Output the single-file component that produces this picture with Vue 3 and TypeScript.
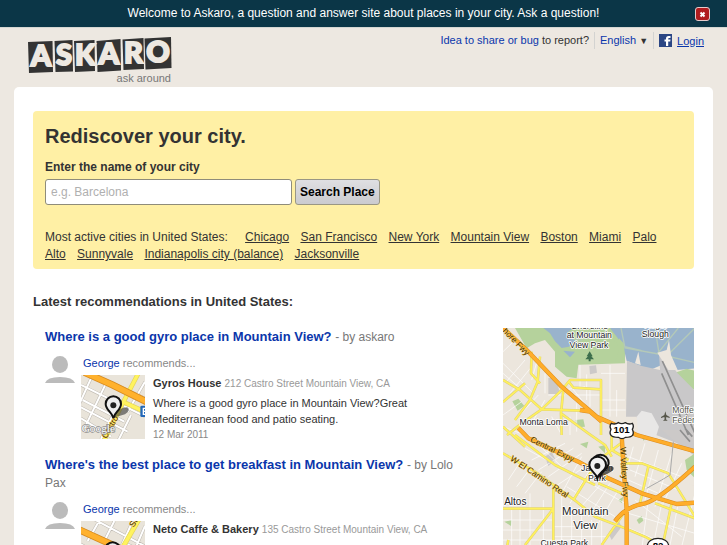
<script setup lang="ts">
import { ref } from 'vue'

interface Recommendation {
  id: number
  question: string
  author: string
  user: string
  place: string
  address: string
  text: string
  date: string
}

const bannerOpen = ref<boolean>(true)
const city = ref<string>('')

const cities: string[] = [
  'Chicago',
  'San Francisco',
  'New York',
  'Mountain View',
  'Boston',
  'Miami',
  'Palo Alto',
  'Sunnyvale',
  'Indianapolis city (balance)',
  'Jacksonville',
]

const recommendations: Recommendation[] = [
  {
    id: 1,
    question: 'Where is a good gyro place in Mountain View?',
    author: 'askaro',
    user: 'George',
    place: 'Gyros House',
    address: '212 Castro Street Mountain View, CA',
    text: 'Where is a good gyro place in Mountain View?Great Mediterranean food and patio seating.',
    date: '12 Mar 2011',
  },
  {
    id: 2,
    question: "Where's the best place to get breakfast in Mountain View?",
    author: 'Lolo Pax',
    user: 'George',
    place: 'Neto Caffe & Bakery',
    address: '135 Castro Street Mountain View, CA',
    text: 'Whats the best place to get breakfast in Mountain View?',
    date: '12 Mar 2011',
  },
]
</script>

<template>
  <div class="page">
    <div v-if="bannerOpen" class="banner">
      <p>Welcome to Askaro, a question and answer site about places in your city. Ask a question!</p>
      <button class="close" type="button" aria-label="Close" @click="bannerOpen = false">
        <svg viewBox="0 0 13 12" aria-hidden="true"><path d="M4.500 4.500L8.500 8.500M8.500 4.500L4.500 8.500" /></svg>
      </button>
    </div>

    <header class="header">
      <a class="logo" href="#" aria-label="Askaro">
        <svg viewBox="0 0 145 48">
          <g fill="#333">
            <path d="M0 5L24.500 4L25 35L1 36Z" />
            <path d="M26.500 4L44.500 3L45 34.500L27.500 35Z" />
            <path d="M46 4L66.500 3L67 34L47 35Z" />
            <path d="M68.500 4L92.500 2L93 33.500L69.500 35Z" />
            <path d="M94.500 2.500L115.500 1L116 32L95.500 33Z" />
            <path d="M116.500 1.500L143 0L143.500 31L117.500 32.500Z" />
          </g>
          <g class="logo-letters">
            <text x="13" y="29">A</text>
            <text x="36" y="28">S</text>
            <text x="57" y="28">K</text>
            <text x="81" y="27">A</text>
            <text x="105.500" y="26">R</text>
            <text x="130" y="25">O</text>
          </g>
          <text class="tagline" x="143" y="45">ask around</text>
        </svg>
      </a>
      <nav class="tools">
        <span class="tool"><a href="#">Idea to share or bug</a> to report?</span>
        <span class="tool"><a href="#">English</a> <span class="arrow">▼</span></span>
        <span class="tool login">
          <svg viewBox="0 0 13 13" aria-hidden="true">
            <path fill="#2b4684" d="M0 0H13V13H0Z" />
            <path fill="#fff" d="M7 12V7.500H5.500V5.500H7V4.500Q7 2 9.500 2H11.500V4H10Q9.200 4 9.200 5V5.500H11.500L11.200 7.500H9.200V12Z" />
          </svg>
          <a href="#">Login</a>
        </span>
      </nav>
    </header>

    <main class="sheet">
      <section class="search">
        <h1>Rediscover your city.</h1>
        <form @submit.prevent>
          <label for="city">Enter the name of your city</label>
          <div class="row">
            <input id="city" v-model="city" type="text" placeholder="e.g. Barcelona" />
            <button type="submit">Search Place</button>
          </div>
        </form>
        <p class="cities">
          <span class="lead">Most active cities in United States:</span>
          <template v-for="name in cities" :key="name">{{ ' ' }}<a href="#">{{ name }}</a></template>
        </p>
      </section>

      <h2>Latest recommendations in United States:</h2>

      <div class="columns">
        <div class="list">
          <article v-for="item in recommendations" :key="item.id">
            <h3><a href="#">{{ item.question }}</a> <span>- by {{ item.author }}</span></h3>
            <div class="body">
              <svg class="avatar" viewBox="0 0 30 28" aria-hidden="true">
                <ellipse cx="15" cy="8.500" rx="8" ry="8.500" />
                <path d="M0 27Q2 21 15 21Q28 21 30 27Z" />
              </svg>
              <div class="detail">
                <p class="who"><a href="#">{{ item.user }}</a> recommends...</p>
                <div class="place">
                  <svg v-if="item.id === 1" class="thumb" viewBox="0 0 192 192" aria-label="Map">
                    <rect width="192" height="192" fill="#e9e4da" />
                    <g fill="none" stroke="#bdb8b0" stroke-width="9">
                      <path d="M0 30L192 124M-10 92L140 170M20 -10L192 70M30 10L-20 120M75 25L10 160M120 70L60 192M5 75L130 140M150 120L110 200M192 20L140 110M0 130L90 185" />
                    </g>
                    <g fill="none" stroke="#fff" stroke-width="6">
                      <path d="M0 30L192 124M-10 92L140 170M20 -10L192 70M30 10L-20 120M75 25L10 160M120 70L60 192M5 75L130 140M150 120L110 200M192 20L140 110M0 130L90 185" />
                    </g>
                    <path d="M172 -5L125 85L70 195M125 80L195 112" fill="none" stroke="#e4d45d" stroke-width="14" />
                    <path d="M172 -5L125 85L70 195M125 80L195 112" fill="none" stroke="#fff35e" stroke-width="10" />
                    <path d="M10 -8L95 30L200 82" fill="none" stroke="#d78b20" stroke-width="21" />
                    <path d="M10 -8L95 30L200 82" fill="none" stroke="#ffb12d" stroke-width="16" />
                    <rect x="178" y="92" width="25" height="34" rx="4" fill="#2468b8" />
                    <path d="M187 98V120M187 100H192M187 109H192M187 118H192" stroke="#fff" stroke-width="4" />
                    <text class="road" transform="translate(76 192) rotate(-60)" font-size="25">Castro</text>
                    <path d="M97 128Q112 96 139 97Q151 106 132 118Z" fill="#333" opacity=".6" />
                    <path d="M97 129C93 111 74 105 74 87A23 23 0 0 1 120 87C120 105 101 111 97 129Z" fill="#eee" stroke="#111" stroke-width="6" />
                    <circle cx="97" cy="91" r="9" fill="#222" />
                    <text class="google" x="2" y="171">Google</text>
                  </svg>
                  <svg v-else class="thumb" viewBox="0 0 192 192" aria-label="Map">
                    <rect width="192" height="192" fill="#e9e4da" />
                    <g fill="none" stroke="#bdb8b0" stroke-width="9">
                      <path d="M30 -10L200 80M0 22L80 60M60 -10L20 60M100 0L70 60M192 15L130 160M0 70L140 150M155 0L110 100M140 70L192 95M0 130L100 190M50 80L0 192" />
                    </g>
                    <g fill="none" stroke="#fff" stroke-width="6">
                      <path d="M30 -10L200 80M0 22L80 60M60 -10L20 60M100 0L70 60M192 15L130 160M0 70L140 150M155 0L110 100M140 70L192 95M0 130L100 190M50 80L0 192" />
                    </g>
                    <path d="M174 -5L127 76L70 195" fill="none" stroke="#e4d45d" stroke-width="15" />
                    <path d="M174 -5L127 76L70 195" fill="none" stroke="#fff35e" stroke-width="11" />
                    <path d="M-8 25L95 72L200 124" fill="none" stroke="#d78b20" stroke-width="21" />
                    <path d="M-8 25L95 72L200 124" fill="none" stroke="#ffb12d" stroke-width="16" />
                    <text class="road" transform="translate(158 20) rotate(-60)" font-size="25">St</text>
                    <path d="M95 129C91 111 72 105 72 87A23 23 0 0 1 118 87C118 105 99 111 95 129Z" fill="#eee" stroke="#111" stroke-width="6" />
                    <circle cx="95" cy="91" r="9" fill="#222" />
                  </svg>
                  <div class="info">
                    <p class="name"><strong>{{ item.place }}</strong> <small>{{ item.address }}</small></p>
                    <p>{{ item.text }}</p>
                    <p class="date">{{ item.date }}</p>
                  </div>
                </div>
              </div>
            </div>
          </article>
        </div>

        <svg class="map" viewBox="24 24 573 720" aria-label="Map of Mountain View">
          <rect x="24" y="24" width="573" height="720" fill="#ece6dd" />
          <path fill="#b5d29c" d="M60 24H390V130L250 134L245 175L215 170L180 140V95L150 60L120 70L95 85Z" />
          <path fill="#99b3cc" d="M145 24H235L215 40L240 62L222 80L200 84L180 64L165 40ZM205 92L240 95L225 112ZM345 24H600V145L545 150L520 120L500 135L470 148L440 140L395 122L385 80L365 60Z" />
          <path fill="#b5d29c" d="M372 55L388 72V126L360 128L372 90ZM540 158L575 146L600 152V210L575 200ZM330 24H345L388 80L375 84Z" />
          <path fill="none" stroke="#b4c9b8" stroke-width="4" d="M378 24L390 84L490 102L600 128M480 24L492 100M488 100L550 24M600 24L518 105M240 60L262 60M390 80L440 92" />
          <path fill="#c9c8c9" d="M396 122L440 138L495 150L492 100L506 105L548 160L600 212V500L560 470L490 425L440 345L425 290L393 290Z" />
          <path fill="#ece6dd" d="M487 98L515 90L522 60L528 105L548 150L520 150ZM430 95L437 135L420 130ZM440 345L470 340L560 375L600 410V500L560 480L440 430Z" />
          <path fill="#e8e7e6" d="M425 290L440 272L470 280L492 320L480 360L430 345Z" />
          <path fill="#ccc9c8" d="M160 174H182L196 222H160ZM283 138L303 136L306 158L285 163ZM340 640L370 600L380 620L350 660ZM150 410L170 395L182 420L160 438ZM500 330L600 330V390L560 380Z" />
          <path fill="#b5d29c" d="M52 244L70 236L88 258L68 272ZM242 300L265 298L270 320L245 322ZM78 78L115 66L90 90ZM255 372L280 365L275 385ZM570 420L600 400V475L575 450ZM425 600L440 588L445 602L432 612ZM310 380L330 375V400ZM28 605L50 600L48 618ZM440 345L460 350L445 362ZM370 540L385 530L380 550Z" />
          <g fill="none" stroke="#fff" stroke-width="2">
            <path d="M24 130L110 215M24 160L75 205M30 190L90 120M45 220L110 140M60 60L24 95M24 285L80 245M60 300L130 225M110 310L150 240M24 320L90 345M130 110L110 180M150 160V220M160 225H210M220 190L300 290M230 225H318M255 135V205M275 163V240M318 160H390M345 135V290M365 210V290M320 240H390M320 270H392" />
            <path d="M205 210L270 200M225 290V345M245 250V335M170 290L200 345M285 205V260M100 345L200 440M110 420L210 370M130 450L235 385M160 470L260 400M180 500L300 420M90 385L220 455M120 370L280 445M200 520L260 410M225 550L290 440M250 570L320 490M280 590L345 490M310 610L370 510M215 500L360 590M250 470L390 550" />
            <path d="M415 380L390 470M450 370L420 470M490 390L450 540M530 400L480 560M560 430L500 560M400 410L560 470M405 450L550 510M400 480L490 520M420 540L560 650M460 540L440 690M500 550L470 700M550 550L520 700M600 520L560 680M400 580L600 640M390 620L580 700" />
            <path d="M40 480L80 420M65 500L110 440M90 520L140 455M24 600H175M24 630H170M24 660H260M50 565V744M75 565V744M105 520V744M145 540V744M200 530V744M230 560V744M260 580V744M290 600V744M175 620H300M175 650H340M24 700H400M320 600V744" />
          </g>
          <g fill="none" stroke="#ded07a" stroke-width="8" stroke-linejoin="round">
            <path d="M24 180L75 210L140 268L260 272M24 246L90 190M36 345L80 310L140 268L205 205L225 180H318V345M222 186L235 203L318 208M110 95L108 160L135 190M135 110L128 185L105 240L60 300M205 210L198 280L200 345M198 280L280 340L330 375L350 410M24 400L120 455L245 545L300 590L390 625L450 650L600 730M24 566H175V500M175 566L90 675M175 500V744M24 744L40 660M60 345L120 390L180 435L300 495M235 540L310 420L385 365M320 675L400 560M310 490L380 520M380 430L440 430L520 460L600 590M460 440L435 550M530 550L500 690M480 550L600 595M350 345V390L400 420M24 320L90 380" />
          </g>
          <g fill="none" stroke="#fff15c" stroke-width="5" stroke-linejoin="round">
            <path d="M24 180L75 210L140 268L260 272M24 246L90 190M36 345L80 310L140 268L205 205L225 180H318V345M222 186L235 203L318 208M110 95L108 160L135 190M135 110L128 185L105 240L60 300M205 210L198 280L200 345M198 280L280 340L330 375L350 410M24 400L120 455L245 545L300 590L390 625L450 650L600 730M24 566H175V500M175 566L90 675M175 500V744M24 744L40 660M60 345L120 390L180 435L300 495M235 540L310 420L385 365M320 675L400 560M310 490L380 520M380 430L440 430L520 460L600 590M460 440L435 550M530 550L500 690M480 550L600 595M350 345V390L400 420M24 320L90 380" />
          </g>
          <g fill="none" stroke="#d98c23" stroke-width="13" stroke-linejoin="round">
            <path d="M24 24L95 90L200 200L305 290L350 310L425 345L600 394M70 324L100 355L250 425L340 475L440 520L545 552L600 548M380 345L385 430L395 570V744M360 604Q390 560 450 550Q490 540 600 440M255 270L285 275L320 305" />
          </g>
          <g fill="none" stroke="#ffad2a" stroke-width="10" stroke-linejoin="round">
            <path d="M24 24L95 90L200 200L305 290L350 310L425 345L600 394M70 324L100 355L250 425L340 475L440 520L545 552L600 548M380 345L385 430L395 570V744M360 604Q390 560 450 550Q490 540 600 440M255 270L285 275L320 305" />
          </g>
          <path fill="none" stroke="#8f8f8f" stroke-width="5" d="M502 123L600 340M500 160L580 345M555 330L585 365M570 325L592 350" />
          <path fill="none" stroke="#aaa" stroke-width="3" d="M455 505L500 480L525 465L535 365" />
          <path fill="#3d6e4c" d="M284 94L293 109H289L297 118H287V124H281V118H271L279 109H275Z" />
          <path fill="#56564a" d="M511 274L514 285L524 291V294L514 291L513 298L518 302H504L509 298L508 291L498 294V291L508 285Z" />
          <g class="labels">
            <text x="284" y="26">Shoreline</text>
            <text x="283" y="55">at Mountain</text>
            <text x="282" y="84">View Park</text>
            <text x="483" y="24">Roger</text>
            <text x="481" y="52">Slough</text>
            <text x="146" y="314">Monta Loma</text>
            <text class="start muted" x="532" y="280">Moffett</text>
            <text class="start muted" x="532" y="310">Federal</text>
            <text class="mid" x="61" y="554">Altos</text>
            <text x="208" y="677">Cuesta Park</text>
            <text x="306" y="453">Jackson</text>
            <text x="306" y="483">Park</text>
            <text class="big" x="271" y="586">Mountain</text>
            <text class="big" x="271" y="627">View</text>
          </g>
          <g class="road" font-size="25">
            <text transform="translate(22 34) rotate(46)">hore Fwy</text>
            <text transform="translate(104 364) rotate(26)">Central Expy</text>
            <text transform="translate(44 420) rotate(34)">W El Camino Real</text>
            <text transform="translate(376 382) rotate(87)">W Valley Fwy</text>
          </g>
          <g fill="#fff" stroke="#222" stroke-width="4">
            <path d="M349 310Q360 315 370 308Q380 314 391 308Q401 315 412 310Q418 318 412 328Q423 352 392 352Q381 360 370 352Q337 352 348 328Q342 318 349 310Z" />
            <ellipse cx="489" cy="677" rx="32" ry="22" />
          </g>
          <text class="shield" x="380" y="339">101</text>
          <text class="shield" x="489" y="688">82</text>
          <path d="M307 473Q322 437 352 439Q365 448 340 460Z" fill="#222" opacity=".7" />
          <path d="M316 468C311 450 291 446 291 429A25 25 0 0 1 341 429C341 446 321 450 316 468Z" fill="#eee" stroke="#111" stroke-width="6" />
          <path d="M307 475C302 456 283 453 283 435A25 25 0 0 1 333 435C333 453 312 456 307 475Z" fill="#f2f2f2" stroke="#111" stroke-width="6" />
          <circle cx="307" cy="438" r="9" fill="#222" />
        </svg>
      </div>
    </main>
  </div>
</template>

<style>
body {
  background: #ede8e1;
}
</style>

<style scoped>
.page {
  height: 100vh;
  overflow: hidden;
  font: 12px/19px "Liberation Sans", Arial, sans-serif;
  color: #333;
}
p, h1, h2, h3 {
  margin: 0;
}
a {
  color: #0a36ab;
  text-decoration: none;
}
.banner {
  display: grid;
  grid-template-columns: 15px 1fr 15px;
  align-items: center;
  height: 28px;
  padding: 0 17px;
  background: #0b3647;
  border-bottom: 1px solid #d5d7d3;
  box-sizing: border-box;
  color: #fff;
  text-align: center;
}
.banner p {
  grid-column: 2;
}
.close {
  width: 15px;
  height: 14px;
  padding: 0;
  border: 1px solid #e6cccc;
  border-radius: 3px;
  background: #b01c1f;
}
.close svg {
  display: block;
  fill: none;
  stroke: #fff;
  stroke-width: 2;
}
.header {
  display: flex;
  justify-content: space-between;
  align-items: flex-start;
  height: 59px;
  padding: 0 23px 0 28px;
  box-sizing: border-box;
}
.logo {
  padding-top: 9px;
}
.logo svg {
  display: block;
  width: 145px;
  height: 48px;
  overflow: visible;
}
.logo-letters {
  font: 900 29px Lato, sans-serif;
  fill: #ede8e1;
  stroke: #ede8e1;
  stroke-width: 2px;
  text-anchor: middle;
}
.tagline {
  font-size: 11px;
  fill: #777;
  text-anchor: end;
}
.tools {
  display: flex;
  padding-top: 4px;
  font-size: 11px;
  line-height: 16px;
}
.tool {
  padding: 0 5px;
  border-left: 1px solid #d3d3d1;
}
.tool:first-child {
  border-left: 0;
}
.arrow {
  font-size: 9px;
}
.login {
  display: flex;
  align-items: center;
  gap: 5px;
  padding-right: 0;
}
.login svg {
  width: 13px;
  height: 13px;
}
.login a {
  text-decoration: underline;
}
.sheet {
  margin: 0 14px;
  padding: 24px 19px;
  border-radius: 5px;
  background: #fff;
}
.search {
  padding: 12px 12px 6px;
  border-radius: 4px;
  background: #fff0a5;
}
h1 {
  font-size: 20px;
  line-height: 27px;
}
label {
  display: block;
  padding: 8px 0 2px;
  font-weight: bold;
}
.row {
  display: flex;
  gap: 3px;
}
input {
  width: 247px;
  height: 26px;
  padding: 0 5px;
  border: 1px solid #8f8c7a;
  border-radius: 3px;
  box-sizing: border-box;
  background: #fff;
  font: inherit;
  color: #333;
}
input::placeholder {
  color: #b0b0b0;
}
.row button {
  height: 26px;
  padding: 0 4px;
  border: 1px solid #9a9784;
  border-radius: 3px;
  background: linear-gradient(#dfdfe2, #cbcbcf);
  font: bold 12px "Liberation Sans", Arial, sans-serif;
  color: #000;
}
.cities {
  padding-top: 24px;
  line-height: 17px;
}
.lead {
  margin-right: 14px;
}
.cities a {
  margin-right: 8px;
  color: #333;
  text-decoration: underline;
}
h2 {
  padding: 23px 0 17px;
  font-size: 13px;
  line-height: 19px;
}
.columns {
  display: grid;
  grid-template-columns: minmax(0, 1fr) 191px;
  gap: 40px;
  padding-left: 12px;
}
.map {
  display: block;
  width: 191px;
  height: 240px;
}
h3 {
  font-size: 13px;
  line-height: 18px;
}
h3 span {
  font-size: 12px;
  line-height: 14px;
  font-weight: normal;
  color: #777;
}
article {
  padding-bottom: 13px;
}
.body {
  display: flex;
  gap: 6px;
  padding-top: 10px;
}
.avatar {
  flex: none;
  width: 30px;
  height: 28px;
  fill: #bbb;
}
.detail {
  flex: 1;
}
.who {
  padding-left: 2px;
  font-size: 11px;
  line-height: 15px;
  color: #888;
}
.place {
  display: flex;
  gap: 8px;
  padding-top: 4px;
}
.thumb {
  flex: none;
  width: 64px;
  height: 64px;
}
.info {
  font-size: 11px;
  line-height: 16px;
}
.name {
  padding-bottom: 4px;
}
.name small {
  font-size: 10px;
  line-height: 14px;
  color: #999;
}
.date {
  font-size: 10px;
  color: #888;
}
.labels {
  font-size: 26px;
  fill: #222;
  stroke: #fff;
  stroke-width: 5px;
  stroke-linejoin: round;
  paint-order: stroke;
  text-anchor: middle;
}
.labels .mid {
  font-size: 30px;
}
.labels .big {
  font-size: 34px;
}
.labels .start {
  text-anchor: start;
}
.labels .muted {
  fill: #56564a;
}
.road {
  fill: #3c2a00;
  stroke: #ffd46a;
  stroke-width: 2px;
  paint-order: stroke;
}
.shield {
  font-size: 29px;
  font-weight: bold;
  text-anchor: middle;
}
.google {
  font: 34px "Liberation Serif", serif;
  fill: #fff;
  stroke: #888;
  stroke-width: 4px;
  paint-order: stroke;
}
</style>
